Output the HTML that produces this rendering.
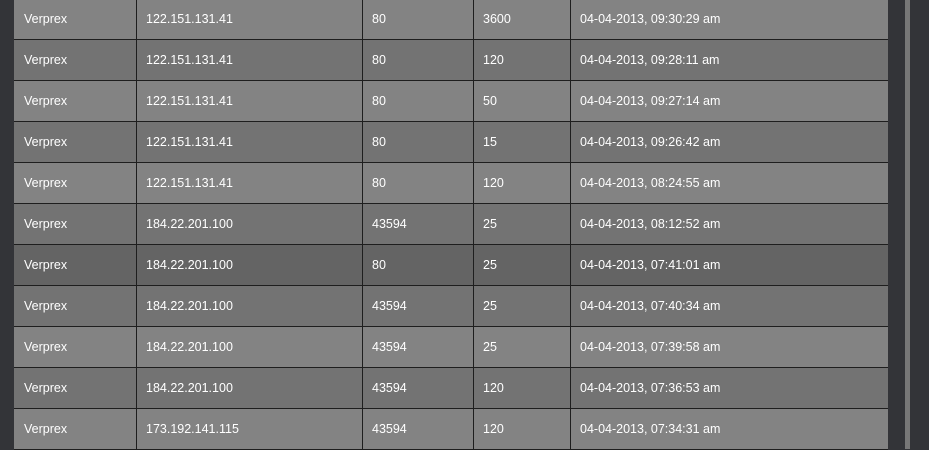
<!DOCTYPE html>
<html><head><style>
body{margin:0;width:929px;height:449px;overflow:hidden;background:#333438;font-family:"Liberation Sans",sans-serif;position:relative}
.t{position:absolute;left:14px;top:-1px;width:874px}
.r{height:40px;border-bottom:1px solid #1e1e1e;position:relative;color:#fff;font-size:12.5px}
.r span{position:absolute;top:0;line-height:40px;height:40px;padding-left:10px;box-sizing:border-box;border-right:1px solid #1e1e1e}
.a{left:0;width:123px}.b{left:122px;width:227px}.c{left:348px;width:112px}.d{left:459px;width:98px}.e{left:556px;width:318px;border-right:none!important}
.L{background:#838383}.D{background:#737373}.H{background:#646464}
.sb1{position:absolute;left:888px;top:0;width:17px;height:449px;background:#333438}
.sb2{position:absolute;left:905px;top:0;width:5px;height:449px;background:#777}
</style></head><body>
<div class="t">
<div class="r L"><span class="a">Verprex</span><span class="b">122.151.131.41</span><span class="c">80</span><span class="d">3600</span><span class="e">04-04-2013, 09:30:29 am</span></div>
<div class="r D"><span class="a">Verprex</span><span class="b">122.151.131.41</span><span class="c">80</span><span class="d">120</span><span class="e">04-04-2013, 09:28:11 am</span></div>
<div class="r L"><span class="a">Verprex</span><span class="b">122.151.131.41</span><span class="c">80</span><span class="d">50</span><span class="e">04-04-2013, 09:27:14 am</span></div>
<div class="r D"><span class="a">Verprex</span><span class="b">122.151.131.41</span><span class="c">80</span><span class="d">15</span><span class="e">04-04-2013, 09:26:42 am</span></div>
<div class="r L"><span class="a">Verprex</span><span class="b">122.151.131.41</span><span class="c">80</span><span class="d">120</span><span class="e">04-04-2013, 08:24:55 am</span></div>
<div class="r D"><span class="a">Verprex</span><span class="b">184.22.201.100</span><span class="c">43594</span><span class="d">25</span><span class="e">04-04-2013, 08:12:52 am</span></div>
<div class="r H"><span class="a">Verprex</span><span class="b">184.22.201.100</span><span class="c">80</span><span class="d">25</span><span class="e">04-04-2013, 07:41:01 am</span></div>
<div class="r D"><span class="a">Verprex</span><span class="b">184.22.201.100</span><span class="c">43594</span><span class="d">25</span><span class="e">04-04-2013, 07:40:34 am</span></div>
<div class="r L"><span class="a">Verprex</span><span class="b">184.22.201.100</span><span class="c">43594</span><span class="d">25</span><span class="e">04-04-2013, 07:39:58 am</span></div>
<div class="r D"><span class="a">Verprex</span><span class="b">184.22.201.100</span><span class="c">43594</span><span class="d">120</span><span class="e">04-04-2013, 07:36:53 am</span></div>
<div class="r L"><span class="a">Verprex</span><span class="b">173.192.141.115</span><span class="c">43594</span><span class="d">120</span><span class="e">04-04-2013, 07:34:31 am</span></div>
</div>
<div class="sb1"></div><div class="sb2"></div>
</body></html>
